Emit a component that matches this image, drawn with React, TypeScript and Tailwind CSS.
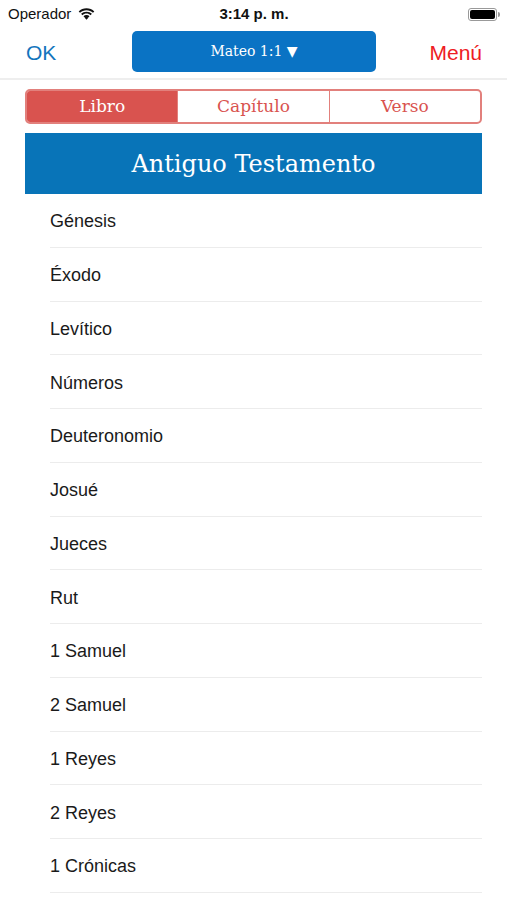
import React from 'react';

const BOOKS = [
  'Génesis',
  'Éxodo',
  'Levítico',
  'Números',
  'Deuteronomio',
  'Josué',
  'Jueces',
  'Rut',
  '1 Samuel',
  '2 Samuel',
  '1 Reyes',
  '2 Reyes',
  '1 Crónicas',
];

const SANS = "font-['Helvetica','Liberation_Sans','Roboto',sans-serif]";
const SLAB = "font-['DejaVu_Serif','Liberation_Serif',serif]";

const Wifi = () => (
  <svg width="17" height="12" viewBox="0 0 17 12" className="ml-[7px]">
    <path d="M8.5 2.2c2.5 0 4.8 1 6.5 2.6l1.3-1.4C14.3 1.5 11.5.3 8.5.3S2.7 1.5.7 3.4L2 4.8c1.7-1.6 4-2.6 6.5-2.6z" fill="#111" />
    <path d="M8.5 5.6c1.6 0 3 .6 4.1 1.6l1.3-1.4C12.5 4.5 10.6 3.7 8.5 3.7S4.5 4.5 3.1 5.8l1.3 1.4c1.1-1 2.5-1.6 4.1-1.6z" fill="#111" />
    <path d="M8.5 9c.7 0 1.3.3 1.8.7L8.5 11.7 6.7 9.7c.5-.4 1.1-.7 1.8-.7z M8.5 7.1c1.2 0 2.2.4 3 1.1l-1.2 1.3c-.5-.4-1.1-.6-1.8-.6s-1.3.2-1.8.6L5.5 8.2c.8-.7 1.8-1.1 3-1.1z" fill="#111" />
  </svg>
);

export default function App() {
  return (
    <div className={`w-[507px] h-[900px] bg-white overflow-hidden flex flex-col ${SANS}`}>
      {/* status bar */}
      <div className="h-[28px] flex items-center justify-between pl-[8px] pr-[7px] text-[15px] text-[#111]">
        <div className="flex items-center w-[120px]">
          <span>Operador</span>
          <Wifi />
        </div>
        <span className="font-semibold">3:14 p. m.</span>
        <div className="w-[120px] flex justify-end items-center">
          <div className="w-[29px] h-[13px] rounded-[3px] border border-[#999] p-[1px]">
            <div className="w-full h-full bg-black rounded-[2px]" />
          </div>
          <div className="w-[2px] h-[5px] bg-[#999] ml-[1px] rounded-r-sm" />
        </div>
      </div>

      {/* nav bar */}
      <div className="h-[52px] flex items-center justify-between px-[26px] border-b-2 border-[#eeeeee]">
        <span className="text-[#1475bd] text-[21px] w-[80px]">OK</span>
        <div className={`w-[244px] h-[41px] -mt-[4px] rounded-[5px] bg-[#0a73c4] flex items-center justify-center text-white text-[14px] ${SLAB}`}>
          Mateo 1:1 ▼
        </div>
        <span className="text-[#ee1c24] text-[21px] w-[80px] text-right -mr-[1px]">Menú</span>
      </div>

      {/* segmented */}
      <div className="px-[25px] pt-[9px]">
        <div className={`h-[35px] flex border-2 border-[#e2807c] rounded-[5px] overflow-hidden text-[17px] ${SLAB}`}>
          <div className="flex-1 bg-[#d9534f] text-white flex items-center justify-center">Libro</div>
          <div className="flex-1 text-[#d9534f] flex items-center justify-center border-x border-[#e2807c]">Capítulo</div>
          <div className="flex-1 text-[#d9534f] flex items-center justify-center">Verso</div>
        </div>

        <div className={`mt-[9px] h-[61px] bg-[#0874b8] flex items-center justify-center text-white text-[24px] ${SLAB}`}>
          Antiguo Testamento
        </div>

        <div className="pl-[25px]">
          {BOOKS.map((b) => (
            <div
              key={b}
              className="h-[53.75px] flex items-center pt-[3px] text-[18px] text-[#1a1a1a] border-b border-[#ececec]"
            >
              {b}
            </div>
          ))}
        </div>
      </div>
    </div>
  );
}
